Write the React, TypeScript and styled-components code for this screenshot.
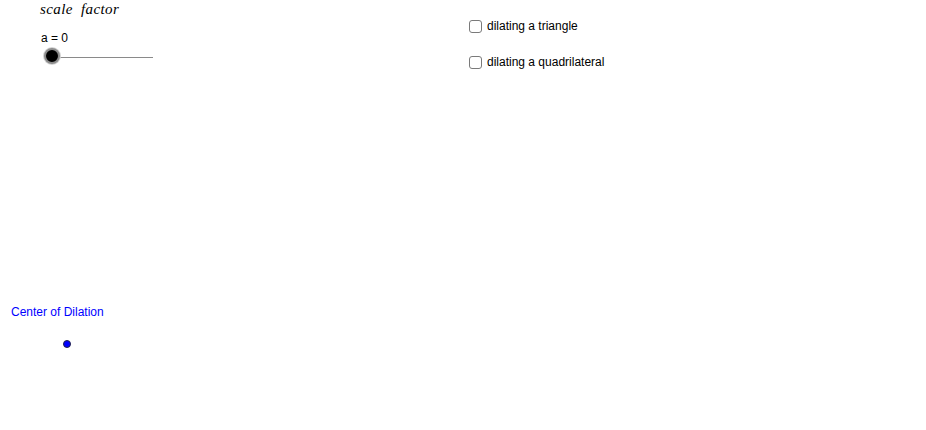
import styled, { createGlobalStyle } from 'styled-components';

const GlobalStyle = createGlobalStyle`
  html, body {
    margin: 0;
    padding: 0;
    background: #ffffff;
  }
  body {
    font-family: "Liberation Sans", Arial, sans-serif;
  }
`;

const Canvas = styled.div`
  position: relative;
  width: 926px;
  height: 430px;
  background: #ffffff;
  overflow: hidden;
`;

const Placed = styled.div<{ $x: number; $y: number }>`
  position: absolute;
  left: ${({ $x }) => $x}px;
  top: ${({ $y }) => $y}px;
`;

const MathLabel = styled.div`
  font-family: "Liberation Serif", "Times New Roman", serif;
  font-style: italic;
  font-size: 15px;
  letter-spacing: 0.4px;
  word-spacing: 4px;
  color: #000;
  line-height: 18px;
  white-space: nowrap;
`;

const SliderBox = styled.div`
  display: flex;
  flex-direction: column;
  gap: 4px;
`;

const SliderLabel = styled.div`
  font-size: 12px;
  line-height: 13px;
  color: #000;
  padding-left: 1px;
`;

const Track = styled.div`
  position: relative;
  width: 114px;
  height: 16px;
  display: flex;
  align-items: center;
`;

const TrackLine = styled.div`
  margin-left: 13px;
  width: 100px;
  height: 1px;
  background: #8a8a8a;
`;

const Knob = styled.div`
  position: absolute;
  left: 4px;
  top: -1px;
  width: 12px;
  height: 12px;
  border-radius: 50%;
  background: #000;
  border: 2.5px solid #8c8c8c;
  box-shadow: 0 0 0 1px #d4d4d4;
`;

const CheckList = styled.div`
  display: flex;
  flex-direction: column;
  gap: 22px;
`;

const CheckRow = styled.label`
  display: flex;
  align-items: center;
  gap: 5px;
  font-size: 12px;
  line-height: 14px;
  color: #000;
  white-space: nowrap;
`;

const Box = styled.span`
  display: inline-block;
  width: 11px;
  height: 11px;
  border: 1.5px solid #7a7a7a;
  border-radius: 3px;
  background: #fff;
`;

const BlueLabel = styled.div`
  font-size: 12px;
  line-height: 13px;
  color: #0000ff;
  white-space: nowrap;
`;

const Point = styled.div`
  width: 6px;
  height: 6px;
  border-radius: 50%;
  background: #0000ff;
  border: 1px solid #22224a;
`;

export default function App() {
  return (
    <>
      <GlobalStyle />
      <Canvas>
        <Placed $x={40} $y={0}>
          <MathLabel>scale factor</MathLabel>
        </Placed>
        <Placed $x={40} $y={32}>
          <SliderBox>
            <SliderLabel>a = 0</SliderLabel>
            <Track>
              <TrackLine />
              <Knob />
            </Track>
          </SliderBox>
        </Placed>
        <Placed $x={469} $y={19}>
          <CheckList>
            <CheckRow>
              <Box />
              dilating a triangle
            </CheckRow>
            <CheckRow>
              <Box />
              dilating a quadrilateral
            </CheckRow>
          </CheckList>
        </Placed>
        <Placed $x={11} $y={306}>
          <BlueLabel>Center of Dilation</BlueLabel>
        </Placed>
        <Placed $x={63} $y={340}>
          <Point />
        </Placed>
      </Canvas>
    </>
  );
}
